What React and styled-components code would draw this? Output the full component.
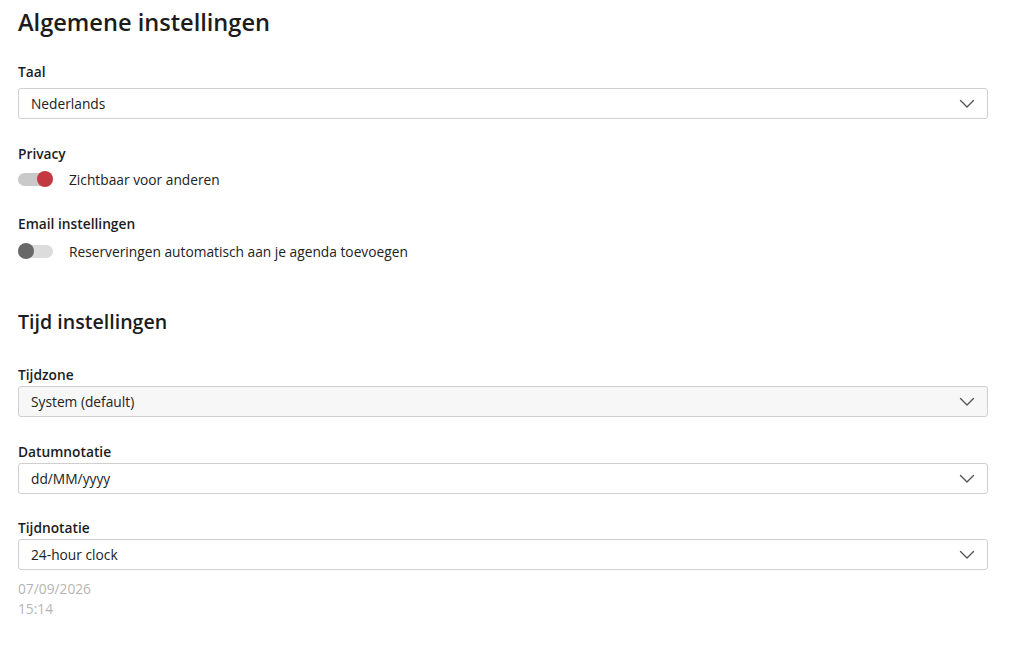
import React from "react";
import styled, { createGlobalStyle } from "styled-components";

const Global = createGlobalStyle`
  html, body { margin: 0; padding: 0; background: #fff; }
  body { font-family: "Open Sans", "Noto Sans", sans-serif; color: #222; }
  * { box-sizing: border-box; }
`;

const Page = styled.div`
  padding: 6px 36px 0 18px;
  display: flex;
  flex-direction: column;
`;

const Heading = styled.h1`
  margin: 0;
  font-size: ${(p) => (p.$small ? "19.6px" : "23.6px")};
  font-weight: 600;
  line-height: 32px;
  color: #1c1c1c;
  margin-top: ${(p) => p.$top || 0}px;
`;

const Field = styled.div`
  display: flex;
  flex-direction: column;
  margin-top: ${(p) => p.$top || 0}px;
`;

const Label = styled.div`
  font-size: 13.75px;
  font-weight: 600;
  line-height: 19px;
  color: #1c1c1c;
  margin-bottom: ${(p) => p.$gap || 0}px;
`;

const SelectBox = styled.div`
  height: 31px;
  border: 1px solid #cfcfcf;
  border-radius: 3px;
  background: ${(p) => (p.$muted ? "#f7f7f7" : "#fff")};
  display: flex;
  align-items: center;
  justify-content: space-between;
  padding: 0 12px 0 12px;
  font-size: 13.75px;
  color: #222;
`;

const Chevron = () => (
  <svg width="16" height="10" viewBox="0 0 16 10" fill="none">
    <path d="M1.5 1.5 L8 8 L14.5 1.5" stroke="#555" strokeWidth="1.4" strokeLinecap="round" strokeLinejoin="round" />
  </svg>
);

const ToggleRow = styled.div`
  display: flex;
  align-items: center;
  gap: 16px;
  height: 20px;
  font-size: 13.75px;
  color: #222;
`;

const Track = styled.div`
  position: relative;
  width: 35px;
  height: 13px;
  border-radius: 7px;
  background: ${(p) => (p.$on ? "#c9c9c9" : "#dcdcdc")};
  flex: none;
`;

const Thumb = styled.div`
  position: absolute;
  top: -1.5px;
  left: ${(p) => (p.$on ? "19px" : "0px")};
  width: 16px;
  height: 16px;
  border-radius: 50%;
  background: ${(p) => (p.$on ? "#c4393f" : "#686868")};
`;

const Select = ({ value, muted }) => (
  <SelectBox $muted={muted}>
    <span>{value}</span>
    <Chevron />
  </SelectBox>
);

const Toggle = ({ on, children }) => (
  <ToggleRow>
    <Track $on={on}>
      <Thumb $on={on} />
    </Track>
    <span>{children}</span>
  </ToggleRow>
);

const Hint = styled.div`
  font-size: 13.75px;
  line-height: 20px;
  color: #b5b5b5;
  margin-top: ${(p) => p.$top || 0}px;
`;

export default function App() {
  return (
    <>
      <Global />
      <Page>
        <Heading>Algemene instellingen</Heading>
        <Field $top={24}>
          <Label $gap={7}>Taal</Label>
          <Select value="Nederlands" />
        </Field>
        <Field $top={25}>
          <Label $gap={6}>Privacy</Label>
          <Toggle on>Zichtbaar voor anderen</Toggle>
        </Field>
        <Field $top={25}>
          <Label $gap={8}>Email instellingen</Label>
          <Toggle>Reserveringen automatisch aan je agenda toevoegen</Toggle>
        </Field>
        <Heading $small $top={45}>Tijd instellingen</Heading>
        <Field $top={27}>
          <Label $gap={2}>Tijdzone</Label>
          <Select value="System (default)" muted />
        </Field>
        <Field $top={25}>
          <Label $gap={2}>Datumnotatie</Label>
          <Select value="dd/MM/yyyy" />
        </Field>
        <Field $top={24}>
          <Label $gap={2}>Tijdnotatie</Label>
          <Select value="24-hour clock" />
        </Field>
        <Hint $top={9}>07/09/2026</Hint>
        <Hint>15:14</Hint>
      </Page>
    </>
  );
}
